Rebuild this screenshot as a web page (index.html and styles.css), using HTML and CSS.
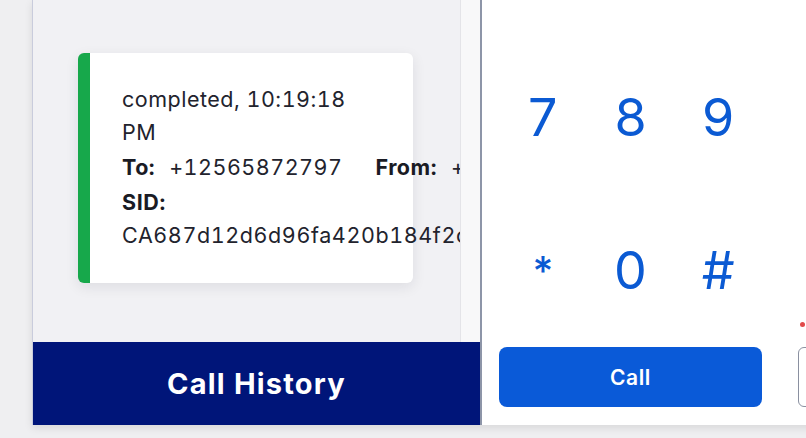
FILE: index.html
```html
<!DOCTYPE html>
<html lang="en">
<head>
<meta charset="utf-8">
<title>Dialer</title>
<link rel="stylesheet" href="styles.css">
</head>
<body>
<div class="app">
  <section class="history">
    <div class="list">
      <div class="scroll">
        <div class="card">
          <div class="status">completed, 10:19:18 PM</div>
          <div class="row">
            <span class="field"><b class="label">To:</b>+12565872797</span>
            <span class="field"><b class="label">From:</b>+12058300271</span>
          </div>
          <div class="sid"><b>SID:</b> CA687d12d6d96fa420b184f2c3a9e71d</div>
        </div>
      </div>
      <div class="track"></div>
    </div>
    <div class="history-bar">Call History</div>
  </section>
  <section class="dialer">
    <div class="pad">
      <div class="keys">
        <span class="key">7</span>
        <span class="key">8</span>
        <span class="key">9</span>
        <span class="key star">*</span>
        <span class="key">0</span>
        <span class="key">#</span>
      </div>
      <button class="call">Call</button>
    </div>
    <div class="side">
      <span class="dot"></span>
      <button class="outline"></button>
    </div>
  </section>
</div>
</body>
</html>
```

FILE: styles.css
```css
html, body {
  margin: 0;
  padding: 0;
}
body {
  width: 806px;
  height: 438px;
  overflow: hidden;
  background: #efeff1;
  font-family: Inter, "Noto Sans", sans-serif;
}
.app {
  margin-left: 32px;
  width: 900px;
  height: 425px;
  display: flex;
  border-left: 1px solid #c9ccdc;
  box-shadow: 0 3px 8px rgba(0, 0, 0, 0.10);
  background: #fff;
}
.history {
  width: 447px;
  flex: none;
  display: flex;
  flex-direction: column;
  background: #f1f1f4;
}
.list {
  flex: 1;
  display: flex;
  min-height: 0;
}
.scroll {
  width: 427px;
  flex: none;
  overflow: hidden;
  padding: 53px 0 0 45px;
  box-sizing: border-box;
}
.track {
  flex: 1;
  background: #f8f8f9;
  border-left: 1px solid #e4e4e8;
}
.card {
  width: 335px;
  box-sizing: border-box;
  background: #fff;
  border-left: 12px solid #17a84b;
  border-radius: 6px;
  box-shadow: 0 4px 14px rgba(20, 20, 40, 0.09);
  padding: 30px 40px 31px 32px;
  color: #22232d;
  font-size: 21.5px;
  line-height: 33px;
  letter-spacing: 0.5px;
  font-variant-numeric: tabular-nums;
}
.row {
  margin-top: 2px;
  display: flex;
  gap: 33px;
  white-space: nowrap;
}
.label {
  margin-right: 14px;
}
.field b, .sid b {
  font-weight: 700;
  color: #1a1b24;
}
.sid {
  margin-top: 2px;
  letter-spacing: 0.6px;
}
.history-bar {
  height: 83px;
  flex: none;
  background: #001579;
  color: #fff;
  font-size: 29px;
  font-weight: 700;
  letter-spacing: 1.2px;
  display: flex;
  align-items: center;
  justify-content: center;
}
.dialer {
  flex: 1;
  border-left: 2px solid #8d95a8;
  background: #fff;
  display: flex;
  gap: 36px;
  padding: 0 0 18px 17px;
  align-items: flex-end;
}
.pad {
  width: 263px;
  flex: none;
  display: flex;
  flex-direction: column;
}
.keys {
  display: grid;
  grid-template-columns: repeat(3, 1fr);
  grid-auto-rows: 153px;
}
.key {
  display: flex;
  align-items: center;
  justify-content: center;
  font-size: 52px;
  font-weight: 400;
  color: #0b5ad3;
}
.key.star {
  font-size: 40px;
  font-weight: 500;
}
.call {
  height: 60px;
  border: none;
  border-radius: 8px;
  background: #0a5ad8;
  color: #fff;
  font-family: Inter, "Noto Sans", sans-serif;
  font-size: 21px;
  font-weight: 600;
  letter-spacing: 0.6px;
  padding: 0;
}
.side {
  display: flex;
  flex-direction: column;
  align-items: flex-start;
}
.dot {
  width: 5px;
  height: 5px;
  border-radius: 50%;
  background: #e14a4a;
  margin: 0 0 20px 2px;
}
.outline {
  width: 120px;
  height: 60px;
  border: 1.5px solid #8a90a0;
  border-radius: 6px;
  background: #fff;
}
```
